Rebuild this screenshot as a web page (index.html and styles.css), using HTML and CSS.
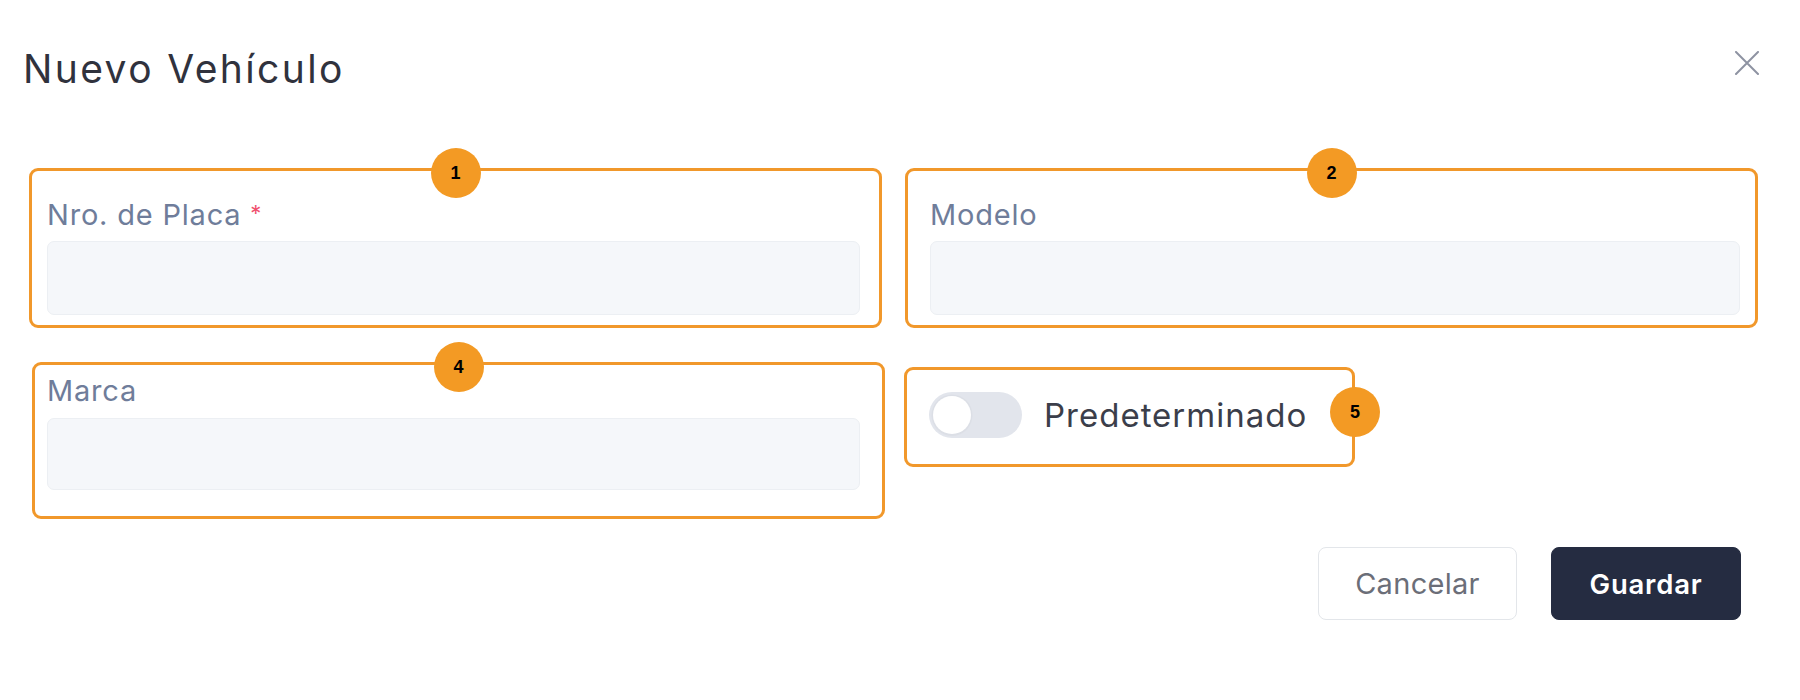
FILE: index.html
```html
<!DOCTYPE html>
<html lang="es">
<head>
<meta charset="utf-8">
<title>Nuevo Vehículo</title>
<link rel="stylesheet" href="styles.css">
</head>
<body>
<div class="modal">
  <div class="modal-header">
    <h1 class="modal-title">Nuevo Vehículo</h1>
    <button class="close-btn" aria-label="Cerrar">
      <svg width="26" height="24" viewBox="0 0 26 24"><path d="M2 1 L24 23 M24 1 L2 23" stroke="#8e93a2" stroke-width="2" fill="none" stroke-linecap="round"/></svg>
    </button>
  </div>

  <div class="form-grid">
    <div class="ann ann-1">
      <span class="badge badge-top">1</span>
      <label class="field-label">Nro. de Placa <span class="req">*</span></label>
      <div class="input"></div>
    </div>
    <div class="ann ann-2">
      <span class="badge badge-top">2</span>
      <label class="field-label">Modelo</label>
      <div class="input"></div>
    </div>
    <div class="ann ann-4">
      <span class="badge badge-top">4</span>
      <label class="field-label">Marca</label>
      <div class="input input-short"></div>
    </div>
    <div class="ann ann-5">
      <span class="badge badge-side">5</span>
      <span class="toggle"><span class="knob"></span></span>
      <span class="toggle-label">Predeterminado</span>
    </div>
  </div>

  <div class="modal-footer">
    <button class="btn btn-cancel">Cancelar</button>
    <button class="btn btn-save">Guardar</button>
  </div>
</div>
</body>
</html>
```

FILE: styles.css
```css
* { box-sizing: border-box; }
html, body { margin: 0; padding: 0; background: #ffffff; }
body { font-family: Inter, "Noto Sans", "Liberation Sans", sans-serif; }

.modal {
  width: 1800px;
  height: 700px;
  padding: 46px 42px 0 29px;
}

.modal-header {
  display: flex;
  justify-content: space-between;
  align-items: flex-start;
  height: 46px;
}
.modal-title {
  margin: 0 0 0 -6px;
  font-size: 39px;
  line-height: 46px;
  font-weight: 400;
  letter-spacing: 2.4px;
  color: #30323d;
}
.close-btn {
  margin: 5px -2px 0 0;
  padding: 0;
  border: 0;
  background: none;
  width: 26px;
  height: 24px;
  display: block;
}
.close-btn svg { display: block; }

.form-grid {
  margin-top: 76px;
  display: grid;
  grid-template-columns: 853px 853px;
  column-gap: 23px;
  row-gap: 34px;
  align-items: start;
}

.ann {
  position: relative;
  border: 3px solid #f1982b;
  border-radius: 9px;
}
.ann-1 { padding: 26px 19px 10px 15px; }
.ann-2 { padding: 26px 15px 10px 22px; }
.ann-4 { padding: 8px 22px 26px 12px; margin-left: 3px; margin-right: -3px; }
.ann-5 {
  width: 451px;
  margin-top: 5px;
  margin-left: -1px;
  padding: 22px 0 26px 22px;
  display: flex;
  align-items: center;
  gap: 22px;
}

.badge {
  position: absolute;
  width: 50px;
  height: 50px;
  border-radius: 50%;
  background: #f39a24;
  color: #000;
  font-family: "Liberation Sans", Arial, sans-serif;
  font-weight: 700;
  font-size: 18px;
  display: flex;
  align-items: center;
  justify-content: center;
}
.badge-top { left: 50%; top: -23px; transform: translateX(-50%); }
.badge-side { right: -28px; top: 17px; }

.field-label {
  display: block;
  height: 36px;
  font-size: 29px;
  line-height: 36px;
  color: #6f7d9a;
  font-weight: 400;
  letter-spacing: 0.8px;
}
.req { color: #f0506e; font-size: 22px; line-height: 0; vertical-align: 4px; }

.input {
  margin-top: 8px;
  height: 74px;
  background: #f5f7fa;
  border: 1px solid #eceff3;
  border-radius: 7px;
}
.input-short { margin-top: 9px; height: 72px; }

.toggle {
  width: 93px;
  height: 46px;
  border-radius: 23px;
  background: #e2e5ec;
  display: flex;
  align-items: center;
  padding-left: 4px;
  flex: none;
}
.knob {
  width: 38px;
  height: 38px;
  border-radius: 50%;
  background: #ffffff;
  box-shadow: 0 0 0 1.5px #dcdfe6, 0 1px 2px rgba(0,0,0,0.08);
}
.toggle-label {
  font-size: 33px;
  line-height: 40px;
  letter-spacing: 1px;
  color: #3b3e4a;
}

.modal-footer {
  margin-top: 28px;
  padding-right: 17px;
  display: flex;
  justify-content: flex-end;
  gap: 34px;
}
.btn {
  height: 73px;
  border-radius: 8px;
  font-family: Inter, "Noto Sans", "Liberation Sans", sans-serif;
  cursor: pointer;
}
.btn-cancel {
  width: 199px;
  background: #ffffff;
  border: 1.5px solid #e3e6ea;
  color: #6b6e78;
  font-size: 29px;
  font-weight: 400;
  letter-spacing: 0.3px;
}
.btn-save {
  width: 190px;
  background: #252c41;
  border: 1px solid #252c41;
  color: #ffffff;
  font-size: 27.5px;
  font-weight: 600;
  letter-spacing: 0.8px;
}
```
